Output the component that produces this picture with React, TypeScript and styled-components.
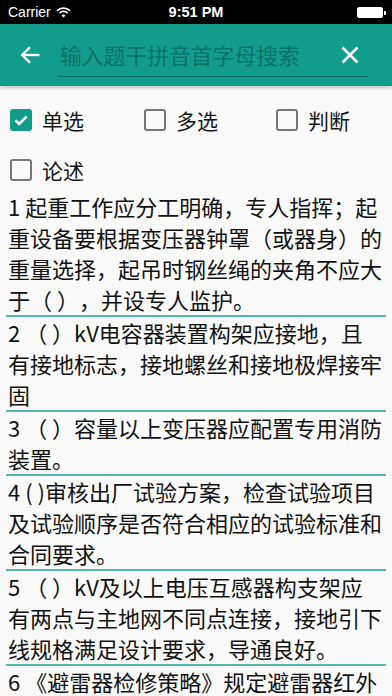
import React, { useState } from 'react'
import styled, { createGlobalStyle } from 'styled-components'

const GlobalStyle = createGlobalStyle`
  html, body {
    margin: 0;
    padding: 0;
    background: #fafafa;
  }
  * { box-sizing: border-box; }
`

const teal = '#129c8c'

const Page = styled.div`
  width: 392px;
  height: 696px;
  overflow: hidden;
  background: #fafafa;
  font-family: "Noto Sans CJK SC", "Noto Sans", sans-serif;
`

const StatusBar = styled.div`
  height: 24px;
  background: #000;
  color: #fff;
  display: flex;
  align-items: center;
  padding: 0 9px 0 8px;
  position: relative;
  font-family: "Liberation Sans", Arial, sans-serif;
`

const Carrier = styled.div`
  display: flex;
  align-items: center;
  gap: 5px;
  font-size: 14px;
  flex: 1;
`

const Clock = styled.div`
  position: absolute;
  left: 0;
  right: 0;
  text-align: center;
  font-size: 14.5px;
  font-weight: 600;
  pointer-events: none;
`

const Battery = styled.div`
  width: 26px;
  height: 11px;
  border: 1px solid #fff;
  border-radius: 2px;
  background: #fff;
  position: relative;
  &::after {
    content: '';
    position: absolute;
    right: -4px;
    top: 3px;
    width: 2px;
    height: 4px;
    background: #fff;
    border-radius: 0 1px 1px 0;
  }
`

const Header = styled.div`
  height: 62px;
  background: ${teal};
  display: flex;
  align-items: center;
  padding: 0 0 0 18px;
  box-shadow: 0 2px 4px rgba(0, 0, 0, 0.22);
  position: relative;
  z-index: 1;
`

const IconButton = styled.button`
  border: none;
  background: none;
  padding: 0;
  width: 24px;
  height: 24px;
  display: flex;
  align-items: center;
  justify-content: center;
  cursor: pointer;
`

const SearchField = styled.input`
  margin-left: 16px;
  width: 310px;
  height: 40px;
  margin-top: 4px;
  border: none;
  border-bottom: 1.5px solid #0b6b60;
  background: transparent;
  font-family: "Noto Sans CJK SC", sans-serif;
  font-size: 21.8px;
  color: #fff;
  padding: 0 0 4px 2px;
  outline: none;
  &::placeholder {
    color: #0d7267;
  }
`

const CloseButton = styled(IconButton)`
  margin-left: -30px;
`

const Options = styled.div`
  display: grid;
  grid-template-columns: 134px 132px 1fr;
  grid-auto-rows: 42px;
  row-gap: 8px;
  padding: 13px 0 0 10px;
`

const Option = styled.label`
  display: flex;
  align-items: center;
  gap: 10px;
  font-size: 21px;
  color: #151515;
  cursor: pointer;
`

const Box = styled.span<{ checked: boolean }>`
  width: 22px;
  height: 22px;
  border-radius: 3px;
  border: ${(p) => (p.checked ? 'none' : '2.5px solid #777')};
  background: ${(p) => (p.checked ? teal : 'transparent')};
  display: flex;
  align-items: center;
  justify-content: center;
`

const List = styled.div`
  display: flex;
  flex-direction: column;
`

const Item = styled.div`
  margin: 0 6px;
  padding: 0 2px;
  border-bottom: 2px solid #52b9ae;
  font-size: 22px;
  line-height: 31px;
  color: #111;
  word-break: break-all;
  text-spacing-trim: space-all;
`

const questions = [
  '1 起重工作应分工明确，专人指挥；起重设备要根据变压器钟罩（或器身）的重量选择，起吊时钢丝绳的夹角不应大于（ ），并设专人监护。',
  '2 （ ）kV电容器装置构架应接地，且有接地标志，接地螺丝和接地极焊接牢固',
  '3 （ ）容量以上变压器应配置专用消防装置。',
  '4 ( )审核出厂试验方案，检查试验项目及试验顺序是否符合相应的试验标准和合同要求。',
  '5 （ ）kV及以上电压互感器构支架应有两点与主地网不同点连接，接地引下线规格满足设计要求，导通良好。',
  '6 《避雷器检修策略》规定避雷器红外检测周期为（ ）。',
]

const types = ['单选', '多选', '判断', '论述']

export default function App() {
  const [selected, setSelected] = useState<string[]>(['单选'])

  const toggle = (t: string) =>
    setSelected((s) => (s.includes(t) ? s.filter((x) => x !== t) : [...s, t]))

  return (
    <Page>
      <GlobalStyle />
      <StatusBar>
        <Carrier>
          Carrier
          <svg width="15" height="11" viewBox="0 0 15 11">
            <path d="M1 3.8a9.2 9.2 0 0 1 13 0" stroke="#fff" strokeWidth="1.7" fill="none" />
            <path d="M3.4 6.1a5.8 5.8 0 0 1 8.2 0" stroke="#fff" strokeWidth="1.7" fill="none" />
            <path d="M7.5 10.5 5.6 8.4a2.7 2.7 0 0 1 3.8 0z" fill="#fff" />
          </svg>
        </Carrier>
        <Clock>9:51 PM</Clock>
        <Battery />
      </StatusBar>
      <Header>
        <IconButton aria-label="back">
          <svg width="22" height="22" viewBox="0 0 24 24" fill="none" stroke="#fff" strokeWidth="2.6" strokeLinecap="square">
            <path d="M21 12H4" />
            <path d="M11 4.5 3.5 12l7.5 7.5" />
          </svg>
        </IconButton>
        <SearchField placeholder="输入题干拼音首字母搜索" />
        <CloseButton aria-label="clear">
          <svg width="18" height="18" viewBox="0 0 18 18" stroke="#fff" strokeWidth="2.6">
            <path d="M1.5 1.5l15 15M16.5 1.5l-15 15" />
          </svg>
        </CloseButton>
      </Header>
      <Options>
        {types.map((t) => {
          const on = selected.includes(t)
          return (
            <Option key={t} onClick={() => toggle(t)}>
              <Box checked={on}>
                {on && (
                  <svg width="16" height="16" viewBox="0 0 16 16" fill="none" stroke="#fff" strokeWidth="2.6">
                    <path d="M2.5 8.3 6.2 12 13.6 4.5" />
                  </svg>
                )}
              </Box>
              {t}
            </Option>
          )
        })}
      </Options>
      <List>
        {questions.map((q) => (
          <Item key={q}>{q}</Item>
        ))}
      </List>
    </Page>
  )
}
